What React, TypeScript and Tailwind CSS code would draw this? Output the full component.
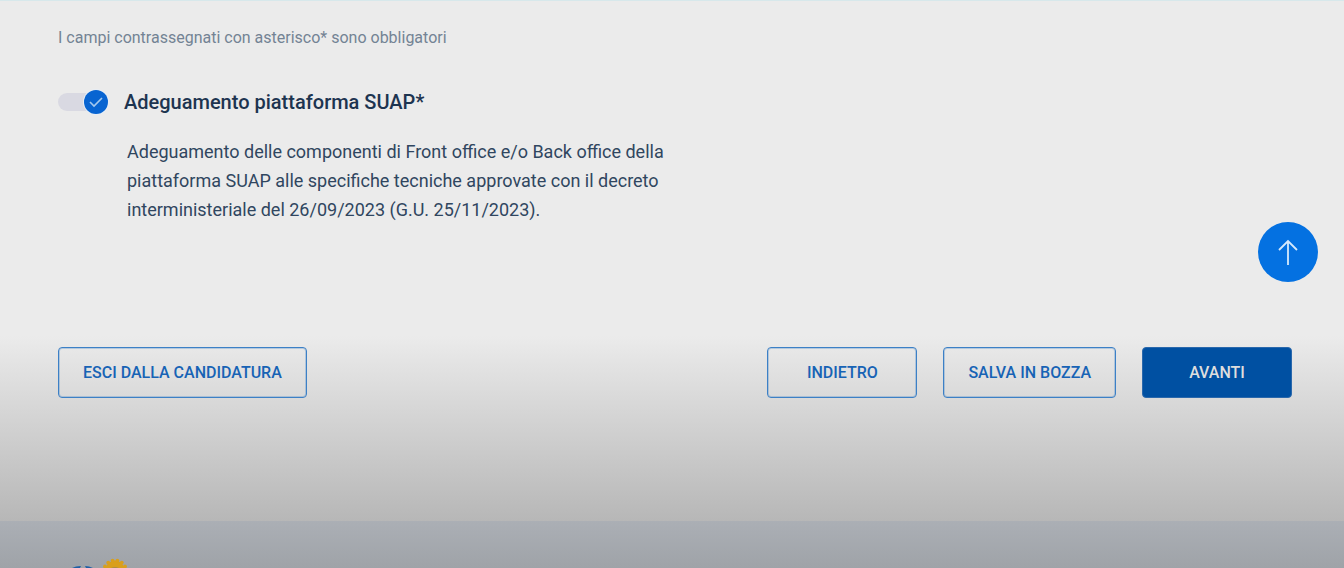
import { useState, type ReactNode } from "react";

function ActionButton({ children, primary = false }: { children: ReactNode; primary?: boolean }) {
  const tone = primary
    ? "bg-[#0050a2] border-[#2a68ac] text-[#dedede]"
    : "border-[#3c80c6] ring-1 ring-inset ring-[#3c80c6]/30 text-[#1763b5]";
  return (
    <button
      type="button"
      className={`h-[51px] min-w-[150px] rounded border px-6 text-base font-medium whitespace-nowrap uppercase ${tone}`}
    >
      {children}
    </button>
  );
}

function FooterLogo() {
  return (
    <svg width="60" height="10" viewBox="0 0 60 10" aria-hidden="true">
      <path d="M2 10 6 8.4 11 8 10 10ZM15 8 19 8.4 23 10H16Z" fill="#1f5fa6" />
      <g fill="#d99f1c">
        <circle cx="45" cy="12" r="9.4" />
        <circle cx="42.6" cy="2.6" r="1.9" />
        <circle cx="47.4" cy="2.6" r="1.9" />
        <circle cx="38.2" cy="4.6" r="1.9" />
        <circle cx="51.8" cy="4.6" r="1.9" />
        <circle cx="35" cy="8.4" r="1.9" />
        <circle cx="55" cy="8.4" r="1.9" />
      </g>
      <path d="M41 10Q45 8 49 10Z" fill="#a98c49" />
    </svg>
  );
}

export default function App() {
  const [enabled, setEnabled] = useState(true);

  return (
    <div className="flex min-h-screen flex-col border-t border-[#d7e8eb] bg-[#ebebeb] font-['Roboto','Liberation_Sans',sans-serif]">
      <main className="flex grow flex-col">
        <section className="px-[58px] pt-[25px] pb-28">
          <p className="text-base leading-6 text-[#738394]">
            I campi contrassegnati con asterisco* sono obbligatori
          </p>
          <label htmlFor="suap" className="mt-9 flex w-fit items-center gap-4">
            <span className="relative flex h-8 w-[50px] shrink-0 items-center">
              <input
                id="suap"
                type="checkbox"
                checked={enabled}
                onChange={(event) => setEnabled(event.target.checked)}
                aria-describedby="suap-description"
                className="peer absolute inset-0 cursor-pointer opacity-0"
              />
              <span className="h-[18px] w-11 rounded-full bg-[#d9d9e2]" />
              <span className="pointer-events-none absolute left-0 flex size-6 items-center justify-center rounded-full bg-[#0864d1] ring-1 ring-[#e8eef5] peer-checked:left-[26px]">
                <svg width="16" height="16" viewBox="0 0 16 16" fill="none" stroke="#a5c9ee" strokeWidth="1.6" aria-hidden="true">
                  <path d="m2 8 4 4 8-8" />
                </svg>
              </span>
            </span>
            <span className="text-xl leading-8 font-medium text-[#1d3450]">Adeguamento piattaforma SUAP*</span>
          </label>
          <p id="suap-description" className="mt-[19px] ml-[69px] max-w-[550px] text-lg leading-[29px] text-[#30465f]">
            Adeguamento delle componenti di Front office e/o Back office della piattaforma SUAP alle specifiche tecniche approvate con il decreto interministeriale del 26/09/2023 (G.U. 25/11/2023).
          </p>
        </section>
        <div className="grow bg-linear-to-b from-[#ebebeb] to-[#b7b7b7] pt-[11px] pr-[52px] pb-24 pl-[58px]">
          <div className="flex items-center justify-between">
            <ActionButton>Esci dalla candidatura</ActionButton>
            <div className="flex gap-[26px]">
              <ActionButton>Indietro</ActionButton>
              <ActionButton>Salva in bozza</ActionButton>
              <ActionButton primary>Avanti</ActionButton>
            </div>
          </div>
        </div>
      </main>
      <footer className="bg-linear-to-b from-[#abafb5] to-[#9fa3a8] px-[70px] pt-[37px]">
        <div className="flex">
          <FooterLogo />
        </div>
      </footer>
      <button
        type="button"
        aria-label="Torna su"
        className="fixed right-[26px] bottom-[286px] flex size-15 items-center justify-center rounded-full bg-[#0471e1]"
      >
        <svg width="28" height="28" viewBox="0 0 28 28" fill="none" stroke="#d5e9fc" strokeWidth="1.8" aria-hidden="true">
          <path d="M14 27V3M5 12l9-9 9 9" />
        </svg>
      </button>
    </div>
  );
}
